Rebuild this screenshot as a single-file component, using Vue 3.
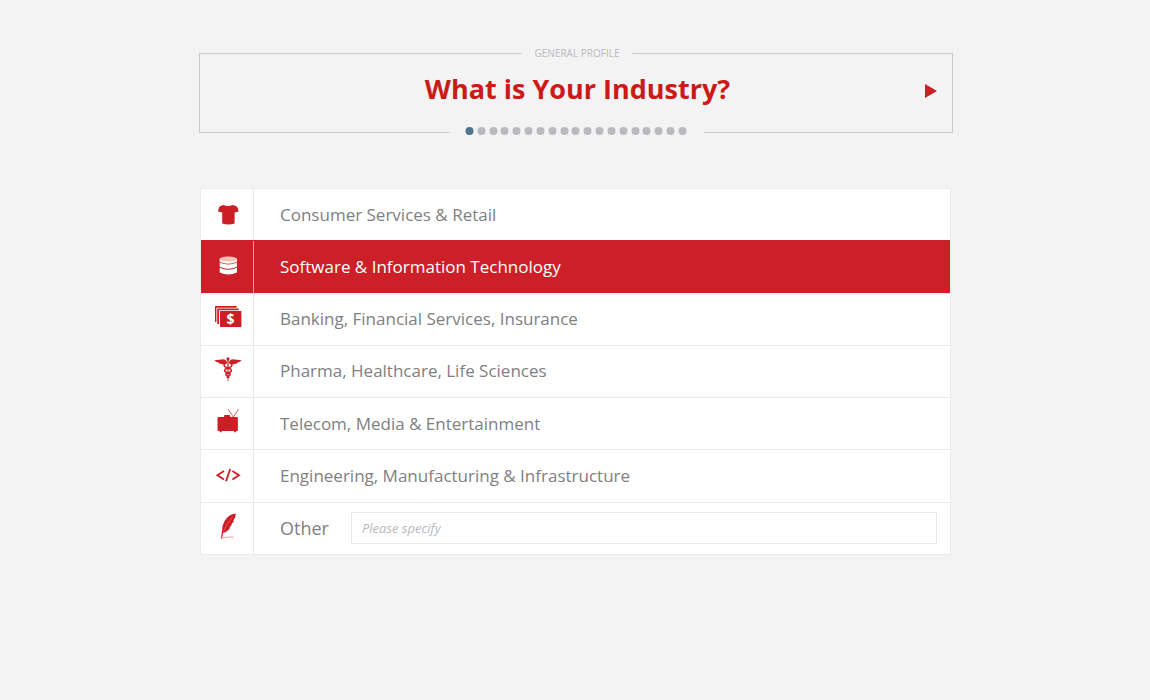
<script setup>
import { ref } from 'vue'

const industries = [
  { id: 'retail', label: 'Consumer Services & Retail' },
  { id: 'software', label: 'Software & Information Technology' },
  { id: 'banking', label: 'Banking, Financial Services, Insurance' },
  { id: 'pharma', label: 'Pharma, Healthcare, Life Sciences' },
  { id: 'telecom', label: 'Telecom, Media & Entertainment' },
  { id: 'engineering', label: 'Engineering, Manufacturing & Infrastructure' },
  { id: 'other', label: 'Other' },
]
const selected = ref('software')
const other = ref('')
const steps = 19
const current = ref(1)

function next() {
  if (current.value < steps) current.value += 1
}
</script>

<template>
  <main class="page">
    <header class="question">
      <p class="section">General Profile</p>
      <h1 class="title">What is Your Industry?</h1>
      <button class="next" type="button" aria-label="Next question" @click="next">
        <svg width="12" height="14" viewBox="0 0 12 14" aria-hidden="true"><path d="M0 0L12 7L0 14Z" fill="currentColor" /></svg>
      </button>
      <div class="progress">
        <ol class="dots">
          <li v-for="n in steps" :key="n" class="dot" :class="{ active: n === current }"></li>
        </ol>
      </div>
    </header>

    <div class="options" role="radiogroup" aria-label="Industry">
      <div v-for="item in industries" :key="item.id" class="row" :class="{ selected: selected === item.id }">
        <input :id="item.id" v-model="selected" class="radio" type="radio" name="industry" :value="item.id" />
        <label class="choice" :for="item.id">
          <span class="icon">
            <svg width="32" height="32" viewBox="0 0 32 32" fill="currentColor" aria-hidden="true">
              <path v-if="item.id === 'retail'" d="M12.4 6Q17 8 21.6 6L25 7Q27 8 27.6 12.4L23.6 13.6V24.6Q17.4 26.4 11.2 24.6V13.6L7 12.4Q7.6 8 9.4 7Z" />
              <g v-else-if="item.id === 'software'">
                <path d="M8.7 8.8V10.8Q17.3 14.8 25.9 10.8V8.8Z" />
                <ellipse cx="17.3" cy="8.4" rx="8.6" ry="2.5" fill="#f6c3ae" stroke="#fff" stroke-width=".6" />
                <path d="M8.7 11.6Q17.3 15.6 25.9 11.6V15.8Q17.3 19.8 8.7 15.8Z" />
                <path d="M8.7 16.8Q17.3 20.8 25.9 16.8V21.4Q17.3 25.6 8.7 21.4Z" />
              </g>
              <g v-else-if="item.id === 'banking'">
                <path d="M4 19V3H25.6V4.8H5.4V19Z" />
                <path d="M6.2 21V5.4H27.8V7.2H8V21Z" />
                <path d="M9 8H30.4V24H9Z" />
                <text class="dollar" x="19.6" y="21" text-anchor="middle">$</text>
              </g>
              <g v-else-if="item.id === 'pharma'">
                <circle cx="17" cy="3.8" r="1.6" />
                <path d="M16.3 4H17.7L17.4 26H16.6Z" />
                <path d="M15.8 6.2Q14 3.6 10.5 4.4L3.4 5.2Q5 7 7 7.2Q8 8.8 10 8.7Q11.4 10.2 15.8 8.6Z" />
                <path d="M18.2 6.2Q20 3.6 23.5 4.4L30.6 5.2Q29 7 27 7.2Q26 8.8 24 8.7Q22.6 10.2 18.2 8.6Z" />
                <g fill="none" stroke="currentColor" stroke-width="1.5">
                  <path d="M15.4 7.6Q11.8 10 13.8 11.6L19.8 14.2Q21.4 16 19.2 17L15 18.8Q14.4 20.4 16.8 21.4L18.2 22.8" />
                  <path d="M18.6 7.6Q22.2 10 20.2 11.6L14.2 14.2Q12.6 16 14.8 17L19 18.8Q19.6 20.4 17.2 21.4L15.8 22.8" />
                </g>
              </g>
              <g v-else-if="item.id === 'telecom'">
                <path d="M7.6 9H13L13.4 7H18.8L19.4 9H26Q26.9 9 26.9 10V22Q26.9 23 26 23H25.4L24.8 24.2H23.4L23 23H10.8L10.4 24.2H9L8.6 23H7.4Q6.5 23 6.5 22V10Q6.5 9 7.6 9Z" />
                <path d="M17.2 1.2L22.4 9.2L27.6 1" fill="none" stroke="currentColor" stroke-width=".7" />
              </g>
              <g v-else-if="item.id === 'engineering'" fill="none" stroke="currentColor" stroke-width="1.8">
                <path d="M13 11L6.4 15.2L13 19.4M21.4 11L28 15.2L21.4 19.4" />
                <path d="M19.2 9L15 21.2" />
              </g>
              <g v-else>
                <path d="M24.8 1.6Q17.4 2.6 13.6 9Q10.8 14 11 18.8L10 26.4L11 26.2L12.2 20.8Q16.6 20 19 15.8L18.6 15.2L20.8 13L20.4 12.2L22.8 9.6L22.4 8.8Q24.8 5.6 24.8 1.6Z" />
                <path d="M12.4 19.4Q15.4 11.8 21.6 5" fill="none" stroke="#f2b5b5" stroke-width=".4" />
                <path d="M10 26.6Q14 24.6 22.6 25.2" fill="none" stroke="currentColor" stroke-width=".6" opacity=".7" />
              </g>
            </svg>
          </span>
          <span class="text" :class="{ large: item.id === 'other' }">{{ item.label }}</span>
        </label>
        <input
          v-if="item.id === 'other'"
          v-model="other"
          class="specify"
          type="text"
          aria-label="Other industry"
          placeholder="Please specify"
          @focus="selected = 'other'"
        />
      </div>
    </div>
  </main>
</template>

<style>
body {
  margin: 0;
  background: #f3f3f3;
}
</style>

<style scoped>
.page {
  box-sizing: border-box;
  max-width: 804px;
  margin: 0 auto;
  padding: 53px 24px 40px 26px;
  font-family: "Open Sans", "Noto Sans", sans-serif;
  color: #7f8082;
}
.question {
  position: relative;
  box-sizing: border-box;
  min-height: 80px;
  padding: 16px 0 24px 3px;
  border: 1px solid #c9cacc;
  text-align: center;
}
.section {
  position: absolute;
  top: -8px;
  left: 50%;
  margin: 0 0 0 1px;
  padding: 0 13px;
  transform: translateX(-50%);
  background: #f3f3f3;
  color: #b9babd;
  font-size: 10px;
  line-height: 14px;
  text-transform: uppercase;
  white-space: nowrap;
}
.title {
  margin: 0;
  color: #cb1a17;
  font-size: 27px;
  font-weight: 700;
  line-height: 38px;
}
.next {
  position: absolute;
  top: 24px;
  right: 9px;
  display: flex;
  padding: 6px;
  border: 0;
  background: none;
  color: #cc1f25;
  cursor: pointer;
}
.progress {
  position: absolute;
  bottom: -3px;
  left: 50%;
  margin-left: 1px;
  padding: 0 18px 0 16px;
  transform: translateX(-50%);
  background: #f3f3f3;
}
.dots {
  display: flex;
  justify-content: space-between;
  width: 221px;
  margin: 0;
  padding: 0;
  list-style: none;
}
.dot {
  width: 8px;
  height: 8px;
  border-radius: 50%;
  background: #b9babd;
}
.dot.active {
  background: #4f7590;
}
.options {
  display: grid;
  grid-auto-rows: 1fr;
  box-sizing: border-box;
  min-height: 367px;
  margin: 55px 2px 0 1px;
  border: solid #ebebeb;
  border-width: 0 1px 1px;
  background: #fff;
}
.row {
  position: relative;
  display: flex;
  align-items: center;
  border-top: 1px solid #ebebeb;
}
.row.selected {
  border-top-color: #cc1f27;
  background: #cc1f27;
  color: #fff;
}
.radio {
  position: absolute;
  width: 1px;
  height: 1px;
  margin: 0;
  opacity: 0;
}
.choice {
  display: flex;
  flex: 1;
  align-items: center;
  align-self: stretch;
  cursor: pointer;
}
.row:last-child .choice {
  flex: none;
}
.icon {
  display: flex;
  flex: none;
  align-items: center;
  justify-content: center;
  align-self: stretch;
  width: 52px;
  border-right: 1px solid #ebebeb;
  color: #cc1f25;
}
.selected .icon {
  border-color: #f0a9a0;
  color: #fff;
}
.dollar {
  fill: #fff;
  font-size: 14px;
  font-weight: 700;
}
.text {
  padding-left: 26px;
  font-size: 17px;
  line-height: 24px;
}
.large {
  font-size: 18px;
}
.specify {
  box-sizing: border-box;
  flex: 1;
  min-width: 0;
  height: 32px;
  margin: 0 13px 0 22px;
  padding: 0 10px;
  border: 1px solid #e9e9e9;
  border-radius: 0;
  background: #fff;
  color: #7f8082;
  font: 13px "Open Sans", "Noto Sans", sans-serif;
}
.specify::placeholder {
  color: #b9babd;
  font-style: italic;
  opacity: 1;
}
</style>
